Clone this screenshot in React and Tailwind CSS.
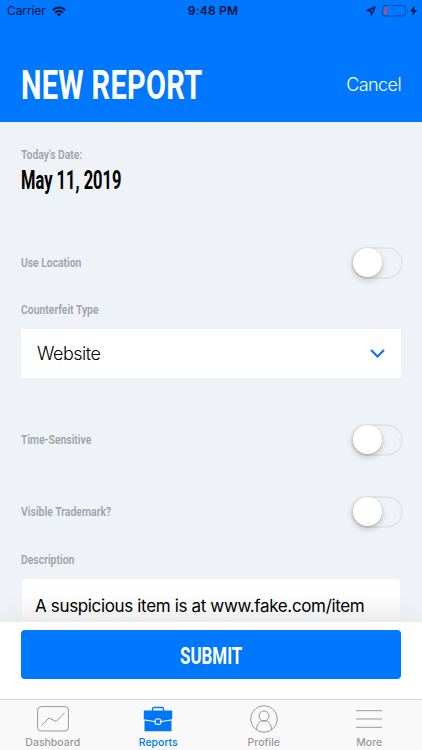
import React, { useState } from 'react';

const labelClass = "inline-block origin-left whitespace-nowrap font-['Roboto',sans-serif] font-semibold text-[13px] leading-4 text-[#a0a3a8]";

const StatusBar = () => (
    <div className="flex h-[22px] items-center justify-between pl-[7px] pr-[5px] text-[#03133a] font-['Inter',sans-serif]">
        <div className="flex w-[140px] items-center gap-[6px]">
            <span className="text-[12px] tracking-[-0.1px] leading-4">Carrier</span>
            <svg className="w-[14px] h-[11px]" viewBox="0 0 14 11" fill="none" stroke="currentColor" strokeWidth="2">
                <path d="M0.8 4.2 C4.2 0.7 9.8 0.7 13.2 4.2" />
                <path d="M3.1 6.7 C5.2 4.5 8.8 4.5 10.9 6.7" />
                <path d="M7 10.4 L4.8 8.2 C6 7 8 7 9.2 8.2 Z" fill="currentColor" stroke="none" />
            </svg>
        </div>
        <span className="pl-[2px] text-[12px] font-semibold leading-4 tracking-[0.2px]">9:48 PM</span>
        <div className="flex w-[140px] items-center justify-end">
            <svg className="w-[10px] h-[10px] mr-[6px]" viewBox="0 0 10 10" fill="none" stroke="currentColor" strokeWidth="1.3" strokeLinejoin="round">
                <path d="M9.2 0.8 L0.9 4.7 L5 5.1 L5.4 9.1 Z" />
            </svg>
            <svg className="w-[27px] h-[12px] mr-[1px]" viewBox="0 0 27 12" fill="none">
                <rect x="0.5" y="0.5" width="23" height="10.5" rx="2.5" stroke="#0a4aa8" />
                <rect x="2" y="2" width="3" height="7.5" rx="0.8" fill="#a9508c" />
                <path d="M25 4 C26.3 4.5 26.3 7 25 7.5 Z" fill="#0a4aa8" />
            </svg>
            <svg className="w-[7px] h-[10px]" viewBox="0 0 6 10" preserveAspectRatio="none" fill="currentColor">
                <path d="M4 0 L0 5.6 H2.6 L1.8 10 L6 4.2 H3.4 Z" />
            </svg>
        </div>
    </div>
);

const Switch = ({ checked, onChange }) => (
    <button
        type="button"
        role="switch"
        aria-checked={checked}
        onClick={onChange}
        className="flex h-[32px] w-[52px] items-start rounded-full border-2 border-[#e4e5e9]"
    >
        <span className={`-mt-px h-[29px] w-[29px] rounded-full bg-white shadow-[0_3px_7px_rgba(0,0,0,0.2),0_1px_2px_rgba(0,0,0,0.12)] ${checked ? 'translate-x-5' : ''}`} />
    </button>
);

const DashboardIcon = () => (
    <svg className="w-[32px] h-[26px]" viewBox="0 0 32 26" fill="none" stroke="currentColor">
        <rect x="0.6" y="0.6" width="30.8" height="24.4" rx="3.5" />
        <path d="M4.5 19.5 L12 12 L19.2 15.5 L27.5 6.8" />
    </svg>
);

const ReportsIcon = () => (
    <svg className="w-[30px] h-[26px]" viewBox="0 0 30 26" fill="currentColor">
        <path d="M9.5 5 V3 Q9.5 1.5 11 1.5 H19 Q20.5 1.5 20.5 3 V5" fill="none" stroke="currentColor" strokeWidth="1.3" />
        <path d="M0.8 4.5 H29.2 V13.2 L18.4 15.1 V14.5 Q18.4 12.8 16.7 12.8 H13.3 Q11.6 12.8 11.6 14.5 V15.1 L0.8 13.2 Z" />
        <path d="M1.5 14.4 L11.6 16.1 V17 Q11.6 18.7 13.3 18.7 H16.7 Q18.4 18.7 18.4 17 V16.1 L28.5 14.4 V25.2 H1.5 Z" />
        <rect x="12.4" y="13" width="5.2" height="5.2" rx="1.3" stroke="#f9f9f9" />
    </svg>
);

const ProfileIcon = () => (
    <svg className="w-[28px] h-[28px]" viewBox="0 0 28 28" fill="none" stroke="currentColor">
        <circle cx="14" cy="14" r="13.3" />
        <circle cx="14" cy="11" r="5" />
        <path d="M6.5 25 C6.7 19 9.3 15.8 14 15.8 C18.7 15.8 21.3 19 21.5 25" />
    </svg>
);

const MoreIcon = () => (
    <svg className="w-[26px] h-[18px]" viewBox="0 0 26 18" stroke="currentColor">
        <path d="M0 0.7 H26 M0 9 H26 M0 17.3 H26" />
    </svg>
);

const tabs = [
    { name: 'Dashboard', icon: <DashboardIcon /> },
    { name: 'Reports', icon: <ReportsIcon /> },
    { name: 'Profile', icon: <ProfileIcon /> },
    { name: 'More', icon: <MoreIcon /> }
];

const App = () => {
    const [form, setForm] = useState({ location: false, urgent: false, trademark: false });
    const [activeTab, setActiveTab] = useState('Reports');

    const toggle = (key) => setForm({ ...form, [key]: !form[key] });

    return (
        <div className="flex h-[750px] w-[422px] flex-col overflow-hidden bg-[#eff2f7]">
            <header className="h-[122px] shrink-0 bg-[#0077ff]">
                <StatusBar />
                <div className="flex h-[100px] items-center justify-between pl-[21px] pr-[21px] pt-[26px]">
                    <h1 className="w-[200px] origin-left scale-x-[0.725] whitespace-nowrap pt-[2px] font-['Roboto',sans-serif] text-[40px] font-bold leading-[48px] tracking-[0.4px] text-white">
                        NEW REPORT
                    </h1>
                    <button type="button" className="font-['Inter',sans-serif] text-[18px] font-light leading-6 tracking-[-0.6px] text-white">
                        Cancel
                    </button>
                </div>
            </header>

            <main className="flex h-[500px] shrink-0 flex-col px-[21px] pt-[25px]">
                <div className="flex h-[92px] flex-col items-start">
                    <span className={`${labelClass} scale-x-[0.795]`}>Today's Date:</span>
                    <span className="mt-[2px] origin-left scale-x-[0.66] whitespace-nowrap font-['Roboto',sans-serif] text-[25px] font-bold leading-8 text-black">
                        May 11, 2019
                    </span>
                </div>

                <div className="-mr-[2px] mt-[8px] flex h-[31px] items-center justify-between">
                    <span className={`${labelClass} scale-x-[0.795]`}>Use Location</span>
                    <Switch checked={form.location} onChange={() => toggle('location')} />
                </div>

                <div className="mt-[24px] flex h-4">
                    <span className={`${labelClass} scale-x-[0.8]`}>Counterfeit Type</span>
                </div>
                <div className="mt-[11px] flex h-[49px] shrink-0 items-center justify-between bg-white pl-4 pr-[16px]">
                    <span className="font-['Inter',sans-serif] text-[18px] font-light leading-6 tracking-[-0.5px] text-black">Website</span>
                    <svg className="w-[15px] h-[9px]" viewBox="0 0 15 9" fill="none" stroke="#0f74ea" strokeWidth="2.2">
                        <path d="M1 1 L7.5 7.5 L14 1" />
                    </svg>
                </div>

                <div className="-mr-[2px] mt-[46px] flex h-[31px] items-center justify-between">
                    <span className={`${labelClass} scale-x-[0.8]`}>Time-Sensitive</span>
                    <Switch checked={form.urgent} onChange={() => toggle('urgent')} />
                </div>
                <div className="-mr-[2px] mt-[41px] flex h-[31px] items-center justify-between">
                    <span className={`${labelClass} scale-x-[0.805]`}>Visible Trademark?</span>
                    <Switch checked={form.trademark} onChange={() => toggle('trademark')} />
                </div>

                <div className="mt-[25px] flex h-[70px] shrink-0 flex-col">
                    <span className={`${labelClass} scale-x-[0.8] self-start`}>Description</span>
                    <div className="mx-[1px] mt-[11px] h-[43px] rounded-t-[3px] bg-linear-to-b from-white from-35% to-[#f3f3f3] pl-[13px] pt-[15px]">
                        <p className="whitespace-nowrap font-['Inter',sans-serif] text-[17px] leading-6 tracking-[-0.35px] text-black">
                            A suspicious item is at www.fake.com/item
                        </p>
                    </div>
                </div>
            </main>

            <div className="relative h-[77px] shrink-0 bg-white px-[21px] pt-2 shadow-[0_-4px_30px_rgba(0,0,0,0.06)]">
                <button type="button" className="flex h-[49px] w-full items-center justify-center rounded-[4px] bg-[#0077ff]">
                    <span className="scale-x-[0.69] pt-[3px] font-['Roboto',sans-serif] text-[24.5px] font-bold leading-8 text-white">SUBMIT</span>
                </button>
            </div>

            <nav className="relative grid h-[51px] shrink-0 grid-cols-4 border-t border-[#d8d8d8] bg-[#f9f9f9]">
                {tabs.map((tab) => (
                    <button
                        key={tab.name}
                        type="button"
                        onClick={() => setActiveTab(tab.name)}
                        className={`flex flex-col items-center pt-[5px] ${activeTab === tab.name ? 'text-[#0077f5]' : 'text-[#999999]'}`}
                    >
                        <span className="flex h-[28px] items-center justify-center">{tab.icon}</span>
                        <span className="mt-[2px] font-['Inter',sans-serif] text-[10.5px] font-medium leading-4 tracking-[0px]">{tab.name}</span>
                    </button>
                ))}
            </nav>
        </div>
    );
};

export default App;
